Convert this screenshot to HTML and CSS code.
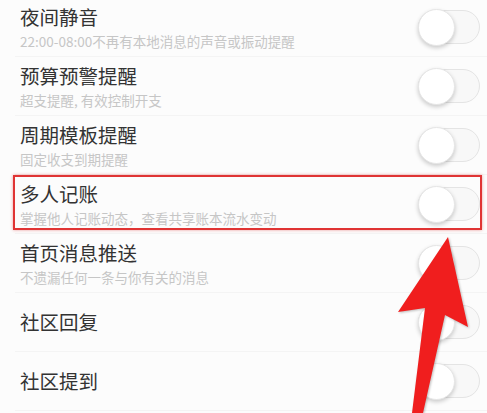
FILE: index.html
```html
<!DOCTYPE html>
<html lang="zh-CN">
<head>
    <meta charset="UTF-8">
    <meta name="viewport" content="width=device-width, initial-scale=1.0">
    <title>消息提醒设置</title>
    <link rel="stylesheet" href="styles.css">
</head>
<body>
    <div class="screen">
        <ul class="settings">
            <li class="row">
                <div class="text">
                    <div class="title">夜间静音</div>
                    <div class="desc">22:00-08:00不再有本地消息的声音或振动提醒</div>
                </div>
                <span class="switch"><span class="knob"></span></span>
            </li>
            <li class="row">
                <div class="text">
                    <div class="title">预算预警提醒</div>
                    <div class="desc">超支提醒, 有效控制开支</div>
                </div>
                <span class="switch"><span class="knob"></span></span>
            </li>
            <li class="row">
                <div class="text">
                    <div class="title">周期模板提醒</div>
                    <div class="desc">固定收支到期提醒</div>
                </div>
                <span class="switch"><span class="knob"></span></span>
            </li>
            <li class="row marked">
                <div class="text">
                    <div class="title">多人记账</div>
                    <div class="desc">掌握他人记账动态，查看共享账本流水变动</div>
                </div>
                <span class="switch"><span class="knob"></span></span>
            </li>
            <li class="row">
                <div class="text">
                    <div class="title">首页消息推送</div>
                    <div class="desc">不遗漏任何一条与你有关的消息</div>
                </div>
                <span class="switch"><span class="knob"></span></span>
            </li>
            <li class="row">
                <div class="text">
                    <div class="title">社区回复</div>
                </div>
                <span class="switch"><span class="knob"></span></span>
            </li>
            <li class="row">
                <div class="text">
                    <div class="title">社区提到</div>
                </div>
                <span class="switch"><span class="knob"></span></span>
            </li>
        </ul>

        <!-- red pointer drawn over the list -->
        <svg class="arrow" viewBox="0 0 487 413" width="487" height="413">
            <polygon points="448,237 468,327 445,315 423,413 412,413 425,308 398,312" fill="#f01e1e"/>
        </svg>
    </div>
</body>
</html>
```

FILE: styles.css
```css
* {
    margin: 0;
    padding: 0;
    box-sizing: border-box;
}

body {
    background: #fcfcfc;
    font-family: "Noto Sans CJK SC", "Noto Sans", sans-serif;
}

.screen {
    position: relative;
    width: 487px;
    height: 413px;
    overflow: hidden;
}

.settings {
    list-style: none;
    margin-top: -2px;
    padding-left: 15px;
}

.row {
    position: relative;
    display: flex;
    align-items: center;
    justify-content: space-between;
    height: 59px;
    padding: 0 7px 0 5px;
    border-bottom: 1px solid #f4f4f4;
}

.row.marked::before {
    content: "";
    position: absolute;
    top: 0;
    left: -2px;
    right: 5px;
    height: 51px;
    border: 2px solid #e03434;
    box-shadow: 0 0 3px rgba(220, 40, 40, 0.45);
}

.title {
    font-size: 19.5px;
    line-height: 28px;
    color: #333;
}

.desc {
    font-size: 13.5px;
    line-height: 20px;
    color: #c6c6c6;
}

.switch {
    position: relative;
    width: 62px;
    height: 34px;
    border-radius: 17px;
    border: 1px solid #e4e4e4;
    background: #f8f8f8;
}

.knob {
    position: absolute;
    left: -1px;
    top: -2px;
    width: 37px;
    height: 37px;
    border-radius: 50%;
    background: #fff;
    border: 1px solid #e6e6e6;
    box-shadow: 0 2px 4px rgba(0, 0, 0, 0.2);
}

.arrow {
    position: absolute;
    top: 0;
    left: 0;
    filter: drop-shadow(1px 1px 1px rgba(0, 0, 0, 0.25));
}
```
